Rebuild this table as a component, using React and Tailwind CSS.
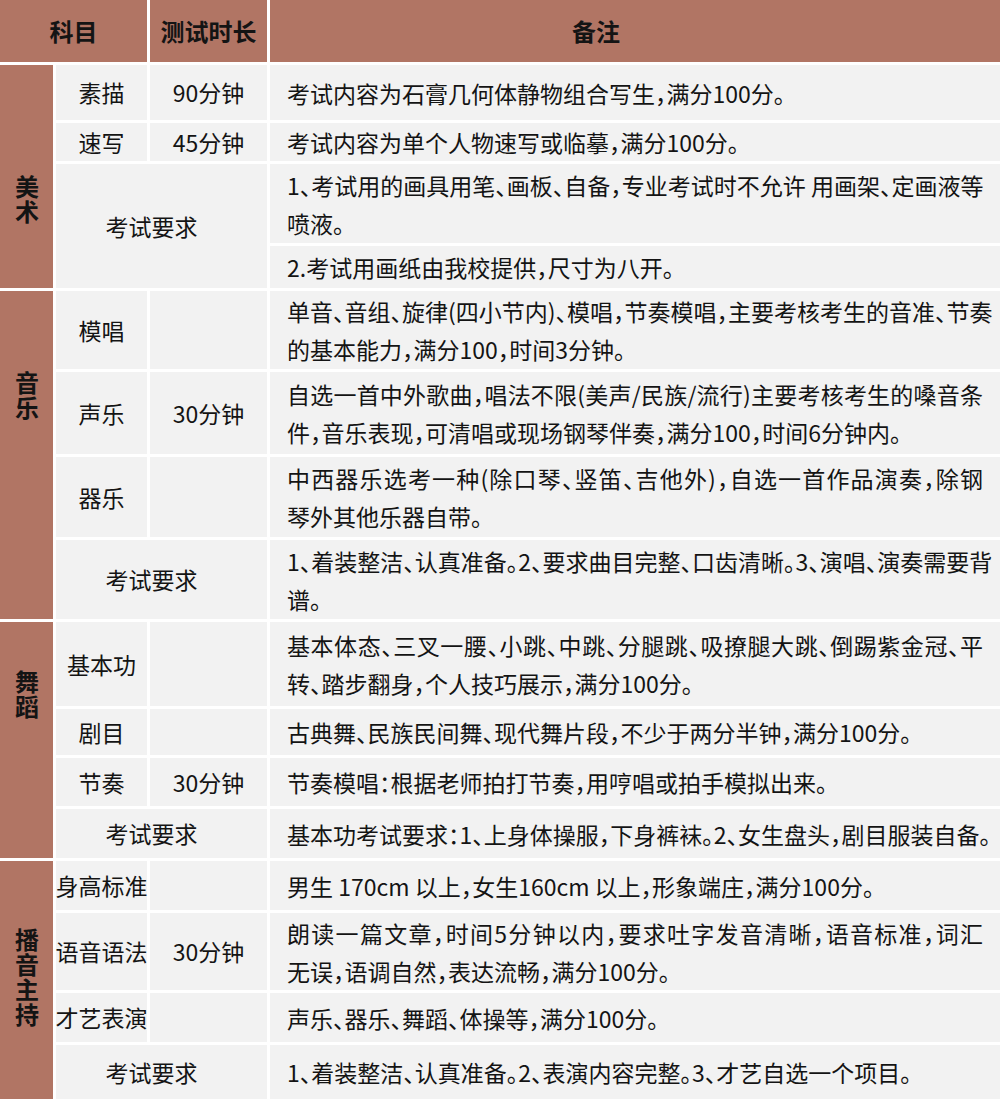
import React from "react";

const FONT = "font-['Noto_Sans_CJK_SC','Noto_Sans',sans-serif]";

function Notes({ lines }) {
  return (
    <div className="pl-[17px] whitespace-nowrap [font-feature-settings:'halt'] text-[23px] leading-[38px]">
      {lines.map((l, i) =>
        i < lines.length - 1 ? (
          <div key={i} className="w-[696px] text-justify [text-align-last:justify]">{l}</div>
        ) : (
          <div key={i}>{l}</div>
        )
      )}
    </div>
  );
}

function Cat({ text }) {
  return (
    <span className="[writing-mode:vertical-rl] [text-orientation:upright] text-[24px] leading-[24px] tracking-[1px] font-bold">
      {text}
    </span>
  );
}

export default function App() {
  return (
    <div className={`w-[1000px] h-[1099px] overflow-hidden bg-white text-[#141414] ${FONT}`}>
      <div className="grid grid-cols-[53px_91px_117px_1fr] grid-rows-[62px_55px_38px_79px_42px_78px_82px_80px_79px_84px_46px_48px_49px_49px_77px_49px_54px] gap-[3px] whitespace-nowrap">
        {/* Header */}
        <div className="[grid-row:1/2] [grid-column:1/3] bg-[#b17564] flex items-center justify-center text-[24px] font-bold">科目</div>
        <div className="[grid-row:1/2] [grid-column:3/4] bg-[#b17564] flex items-center justify-center text-[24px] font-bold">测试时长</div>
        <div className="[grid-row:1/2] [grid-column:4/5] bg-[#b17564] flex items-center pl-[302px] text-[24px] font-bold">备注</div>

        {/* 美术 */}
        <div className="[grid-row:2/6] [grid-column:1/2] bg-[#b17564] flex justify-center pt-[110px]">
          <Cat text="美术" />
        </div>
        <div className="[grid-row:2/3] [grid-column:2/3] bg-[#f2f2f2] flex items-center justify-center text-[23px]">素描</div>
        <div className="[grid-row:2/3] [grid-column:3/4] bg-[#f2f2f2] flex items-center justify-center text-[23px]">90分钟</div>
        <div className="[grid-row:2/3] [grid-column:4/5] bg-[#f2f2f2] flex items-center"><Notes lines={["考试内容为石膏几何体静物组合写生，满分100分。"]} /></div>

        <div className="[grid-row:3/4] [grid-column:2/3] bg-[#f2f2f2] flex items-center justify-center text-[23px]">速写</div>
        <div className="[grid-row:3/4] [grid-column:3/4] bg-[#f2f2f2] flex items-center justify-center text-[23px]">45分钟</div>
        <div className="[grid-row:3/4] [grid-column:4/5] bg-[#f2f2f2] flex items-center"><Notes lines={["考试内容为单个人物速写或临摹，满分100分。"]} /></div>

        <div className="[grid-row:4/6] [grid-column:2/4] bg-[#f2f2f2] flex items-center justify-center pr-[20px] text-[23px]">考试要求</div>
        <div className="[grid-row:4/5] [grid-column:4/5] bg-[#f2f2f2] flex items-center"><Notes lines={["1、考试用的画具用笔、画板、自备，专业考试时不允许 用画架、定画液等", "喷液。"]} /></div>
        <div className="[grid-row:5/6] [grid-column:4/5] bg-[#f2f2f2] flex items-center"><Notes lines={["2.考试用画纸由我校提供，尺寸为八开。"]} /></div>

        {/* 音乐 */}
        <div className="[grid-row:6/10] [grid-column:1/2] bg-[#b17564] flex justify-center pt-[80px]">
          <Cat text="音乐" />
        </div>
        <div className="[grid-row:6/7] [grid-column:2/3] bg-[#f2f2f2] flex items-center justify-center text-[23px]">模唱</div>
        <div className="[grid-row:6/7] [grid-column:3/4] bg-[#f2f2f2]"></div>
        <div className="[grid-row:6/7] [grid-column:4/5] bg-[#f2f2f2] flex items-center"><Notes lines={["单音、音组、旋律(四小节内)、模唱，节奏模唱，主要考核考生的音准、节奏", "的基本能力，满分100，时间3分钟。"]} /></div>

        <div className="[grid-row:7/8] [grid-column:2/3] bg-[#f2f2f2] flex items-center justify-center text-[23px]">声乐</div>
        <div className="[grid-row:7/8] [grid-column:3/4] bg-[#f2f2f2] flex items-center justify-center text-[23px]">30分钟</div>
        <div className="[grid-row:7/8] [grid-column:4/5] bg-[#f2f2f2] flex items-center"><Notes lines={["自选一首中外歌曲，唱法不限(美声/民族/流行)主要考核考生的嗓音条", "件，音乐表现，可清唱或现场钢琴伴奏，满分100，时间6分钟内。"]} /></div>

        <div className="[grid-row:8/9] [grid-column:2/3] bg-[#f2f2f2] flex items-center justify-center text-[23px]">器乐</div>
        <div className="[grid-row:8/9] [grid-column:3/4] bg-[#f2f2f2]"></div>
        <div className="[grid-row:8/9] [grid-column:4/5] bg-[#f2f2f2] flex items-center"><Notes lines={["中西器乐选考一种(除口琴、竖笛、吉他外)，自选一首作品演奏，除钢", "琴外其他乐器自带。"]} /></div>

        <div className="[grid-row:9/10] [grid-column:2/4] bg-[#f2f2f2] flex items-center justify-center pr-[20px] text-[23px]">考试要求</div>
        <div className="[grid-row:9/10] [grid-column:4/5] bg-[#f2f2f2] flex items-center"><Notes lines={["1、着装整洁、认真准备。2、要求曲目完整、口齿清晰。3、演唱、演奏需要背", "谱。"]} /></div>

        {/* 舞蹈 */}
        <div className="[grid-row:10/14] [grid-column:1/2] bg-[#b17564] flex justify-center pt-[48px]">
          <Cat text="舞蹈" />
        </div>
        <div className="[grid-row:10/11] [grid-column:2/3] bg-[#f2f2f2] flex items-center justify-center text-[23px]">基本功</div>
        <div className="[grid-row:10/11] [grid-column:3/4] bg-[#f2f2f2]"></div>
        <div className="[grid-row:10/11] [grid-column:4/5] bg-[#f2f2f2] flex items-center"><Notes lines={["基本体态、三叉一腰、小跳、中跳、分腿跳、吸撩腿大跳、倒踢紫金冠、平", "转、踏步翻身，个人技巧展示，满分100分。"]} /></div>

        <div className="[grid-row:11/12] [grid-column:2/3] bg-[#f2f2f2] flex items-center justify-center text-[23px]">剧目</div>
        <div className="[grid-row:11/12] [grid-column:3/4] bg-[#f2f2f2]"></div>
        <div className="[grid-row:11/12] [grid-column:4/5] bg-[#f2f2f2] flex items-center"><Notes lines={["古典舞、民族民间舞、现代舞片段，不少于两分半钟，满分100分。"]} /></div>

        <div className="[grid-row:12/13] [grid-column:2/3] bg-[#f2f2f2] flex items-center justify-center text-[23px]">节奏</div>
        <div className="[grid-row:12/13] [grid-column:3/4] bg-[#f2f2f2] flex items-center justify-center text-[23px]">30分钟</div>
        <div className="[grid-row:12/13] [grid-column:4/5] bg-[#f2f2f2] flex items-center"><Notes lines={["节奏模唱：根据老师拍打节奏，用哼唱或拍手模拟出来。"]} /></div>

        <div className="[grid-row:13/14] [grid-column:2/4] bg-[#f2f2f2] flex items-center justify-center pr-[20px] text-[23px]">考试要求</div>
        <div className="[grid-row:13/14] [grid-column:4/5] bg-[#f2f2f2] flex items-center"><Notes lines={["基本功考试要求：1、上身体操服，下身裤袜。2、女生盘头，剧目服装自备。"]} /></div>

        {/* 播音主持 */}
        <div className="[grid-row:14/18] [grid-column:1/2] bg-[#b17564] flex justify-center pt-[67px]">
          <Cat text="播音主持" />
        </div>
        <div className="[grid-row:14/15] [grid-column:2/3] bg-[#f2f2f2] flex items-center justify-center text-[23px]">身高标准</div>
        <div className="[grid-row:14/15] [grid-column:3/4] bg-[#f2f2f2]"></div>
        <div className="[grid-row:14/15] [grid-column:4/5] bg-[#f2f2f2] flex items-center"><Notes lines={["男生 170cm 以上，女生160cm 以上，形象端庄，满分100分。"]} /></div>

        <div className="[grid-row:15/16] [grid-column:2/3] bg-[#f2f2f2] flex items-center justify-center text-[23px]">语音语法</div>
        <div className="[grid-row:15/16] [grid-column:3/4] bg-[#f2f2f2] flex items-center justify-center text-[23px]">30分钟</div>
        <div className="[grid-row:15/16] [grid-column:4/5] bg-[#f2f2f2] flex items-center"><Notes lines={["朗读一篇文章，时间5分钟以内，要求吐字发音清晰，语音标准，词汇", "无误，语调自然，表达流畅，满分100分。"]} /></div>

        <div className="[grid-row:16/17] [grid-column:2/3] bg-[#f2f2f2] flex items-center justify-center text-[23px]">才艺表演</div>
        <div className="[grid-row:16/17] [grid-column:3/4] bg-[#f2f2f2]"></div>
        <div className="[grid-row:16/17] [grid-column:4/5] bg-[#f2f2f2] flex items-center"><Notes lines={["声乐、器乐、舞蹈、体操等，满分100分。"]} /></div>

        <div className="[grid-row:17/18] [grid-column:2/4] bg-[#f2f2f2] flex items-center justify-center pr-[20px] text-[23px]">考试要求</div>
        <div className="[grid-row:17/18] [grid-column:4/5] bg-[#f2f2f2] flex items-center"><Notes lines={["1、着装整洁、认真准备。2、表演内容完整。3、才艺自选一个项目。"]} /></div>
      </div>
    </div>
  );
}
